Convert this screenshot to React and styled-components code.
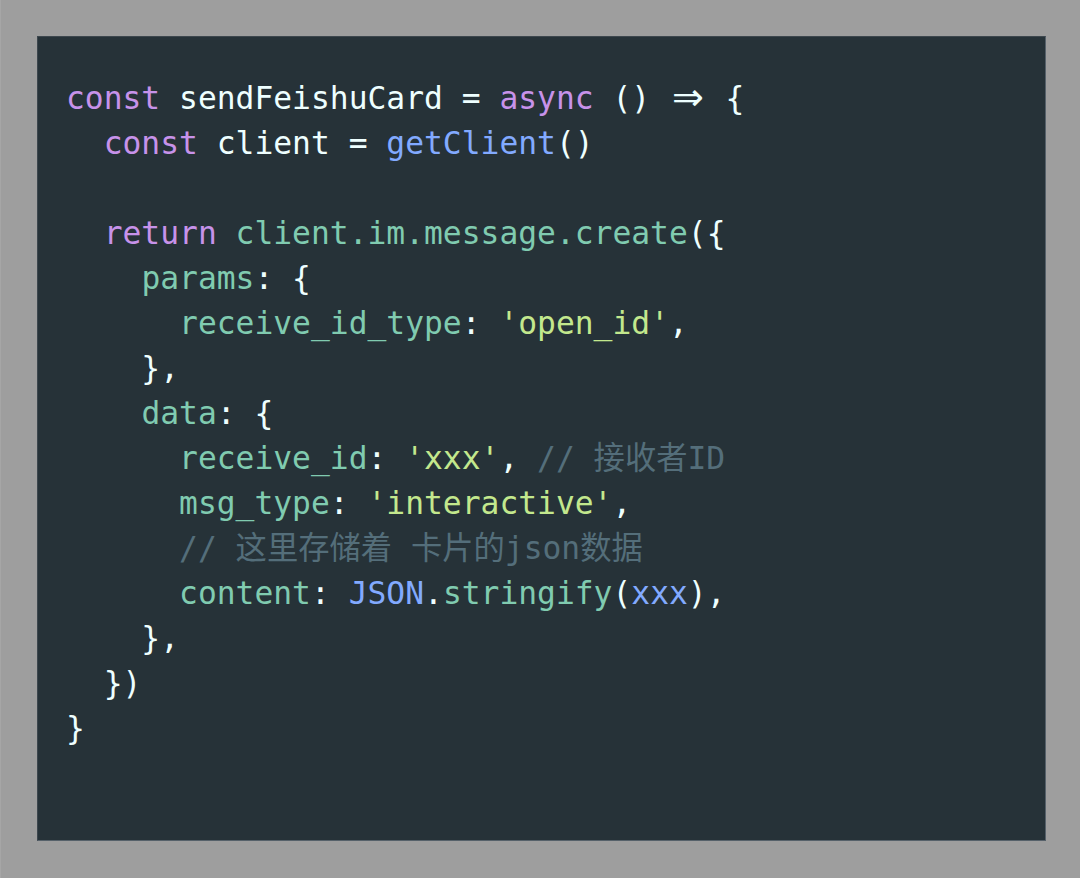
import React from "react";
import styled, { createGlobalStyle } from "styled-components";

const Global = createGlobalStyle`
  html, body { margin: 0; padding: 0; background: #9e9e9e; }
  #root { min-height: 878px; }
`;

const Page = styled.div`
  box-sizing: border-box;
  width: 1080px;
  height: 878px;
  padding: 36px 34px 37px 36px;
  background: #9e9e9e;
  border-left: 1px solid #a6a6a6;
`;

const Panel = styled.div`
  box-sizing: border-box;
  height: 100%;
  background: #263238;
  border: 1px solid #56616a;
  border-top-color: #3d474e;
  border-left-color: #3d474e;
  padding: 39px 28px 0 28px;
`;

const Code = styled.pre`
  margin: 0;
  font-family: "DejaVu Sans Mono", "Noto Sans CJK SC", monospace;
  font-size: 31.3px;
  line-height: 45px;
  color: #eeffff;
  white-space: pre;
`;

const Line = styled.div`
  height: 45px;
`;

const colors = {
  kw: "#c792ea",
  plain: "#eeffff",
  fn: "#82aaff",
  prop: "#80cbb0",
  str: "#c3e88d",
  cm: "#546e7a",
};

const Tok = styled.span`
  color: ${(p) => colors[p.$kind] || colors.plain};
`;

const Arrow = styled.span`
  display: inline-block;
  width: 37.7px;
  text-align: center;
  color: #eeffff;
  font-family: "DejaVu Sans", sans-serif;
  font-size: 38px;
  line-height: 1;
  vertical-align: -1px;
`;

const lines = [
  [["kw", "const"], ["plain", " sendFeishuCard = "], ["kw", "async"], ["plain", " () "], ["arrow", "⇒"], ["plain", " {"]],
  [["plain", "  "], ["kw", "const"], ["plain", " client = "], ["fn", "getClient"], ["plain", "()"]],
  [],
  [["plain", "  "], ["kw", "return"], ["plain", " "], ["prop", "client.im.message.create"], ["plain", "({"]],
  [["plain", "    "], ["prop", "params"], ["plain", ": {"]],
  [["plain", "      "], ["prop", "receive_id_type"], ["plain", ": "], ["str", "'open_id'"], ["plain", ","]],
  [["plain", "    },"]],
  [["plain", "    "], ["prop", "data"], ["plain", ": {"]],
  [["plain", "      "], ["prop", "receive_id"], ["plain", ": "], ["str", "'xxx'"], ["plain", ", "], ["cm", "// 接收者ID"]],
  [["plain", "      "], ["prop", "msg_type"], ["plain", ": "], ["str", "'interactive'"], ["plain", ","]],
  [["plain", "      "], ["cm", "// 这里存储着 卡片的json数据"]],
  [["plain", "      "], ["prop", "content"], ["plain", ": "], ["fn", "JSON"], ["plain", "."], ["prop", "stringify"], ["plain", "("], ["fn", "xxx"], ["plain", "),"]],
  [["plain", "    },"]],
  [["plain", "  })"]],
  [["plain", "}"]],
];

export default function App() {
  return (
    <>
      <Global />
      <Page>
        <Panel>
          <Code>
            {lines.map((toks, i) => (
              <Line key={i}>
                {toks.map(([k, t], j) =>
                  k === "arrow" ? (
                    <Arrow key={j}>{t}</Arrow>
                  ) : (
                    <Tok key={j} $kind={k}>
                      {t}
                    </Tok>
                  )
                )}
              </Line>
            ))}
          </Code>
        </Panel>
      </Page>
    </>
  );
}
